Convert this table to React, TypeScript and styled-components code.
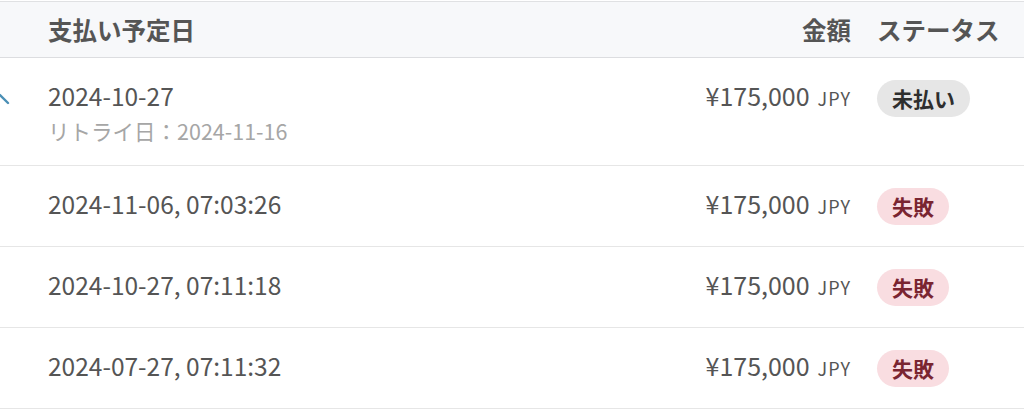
import React from 'react'
import styled, { createGlobalStyle } from 'styled-components'

type Status = 'unpaid' | 'failed'

interface Payment {
  date: string
  retry?: string
  amount: string
  status: Status
  open?: boolean
}

const payments: Payment[] = [
  { date: '2024-10-27', retry: '2024-11-16', amount: '¥175,000', status: 'unpaid', open: true },
  { date: '2024-11-06, 07:03:26', amount: '¥175,000', status: 'failed' },
  { date: '2024-10-27, 07:11:18', amount: '¥175,000', status: 'failed' },
  { date: '2024-07-27, 07:11:32', amount: '¥175,000', status: 'failed' },
]

const statusLabel: Record<Status, string> = {
  unpaid: '未払い',
  failed: '失敗',
}

const GlobalStyle = createGlobalStyle`
  html, body {
    margin: 0;
    padding: 0;
    background: #fff;
  }
  body {
    font-family: "Noto Sans CJK JP", "Noto Sans", sans-serif;
    color: #555;
  }
`

const ChevronUp: React.FC = () => (
  <StyledChevron width="24" height="24" viewBox="0 0 24 24">
    <polyline points="4,16 12,8 20,16" fill="none" stroke="#4a8fb5" strokeWidth="2.4" strokeLinecap="round" strokeLinejoin="round" />
  </StyledChevron>
)

const App: React.FC = () => {
  return (
    <>
      <GlobalStyle />
      <StyledTable>
        <StyledHead>
          <span />
          <StyledHeadCell>支払い予定日</StyledHeadCell>
          <StyledHeadCell>金額</StyledHeadCell>
          <StyledHeadCell>ステータス</StyledHeadCell>
        </StyledHead>
        {payments.map((p, idx) => (
          <StyledRow key={idx}>
            <StyledToggle>{p.open ? <ChevronUp /> : null}</StyledToggle>
            <StyledDateCell>
              <StyledDate>{p.date}</StyledDate>
              {p.retry ? <StyledRetry>リトライ日：{p.retry}</StyledRetry> : null}
            </StyledDateCell>
            <StyledAmount>
              {p.amount}
              <StyledCurrency>JPY</StyledCurrency>
            </StyledAmount>
            <StyledStatusCell>
              <StyledBadge $status={p.status}>{statusLabel[p.status]}</StyledBadge>
            </StyledStatusCell>
          </StyledRow>
        ))}
      </StyledTable>
    </>
  )
}

const StyledTable = styled.section`
  margin-top: 1px;
  width: 100%;
`

const StyledHead = styled.header`
  display: grid;
  grid-template-columns: 22px 1fr auto 120px;
  column-gap: 26px;
  align-items: center;
  height: 55px;
  padding-right: 27px;
  background-color: #f7f8fa;
  border-top: 1px solid #e0e1e3;
  border-bottom: 1px solid #dcdde0;
`

const StyledHeadCell = styled.span`
  font-size: 24.5px;
  font-weight: 700;
  line-height: 34px;
  color: #555;
  white-space: nowrap;
`

const StyledRow = styled.div`
  display: grid;
  grid-template-columns: 22px 1fr auto 120px;
  column-gap: 26px;
  align-items: start;
  padding: 22px 27px 21px 0;
  border-bottom: 1px solid #e6e6e6;
`

const StyledToggle = styled.div`
  height: 37px;
  display: flex;
  align-items: center;
`

const StyledChevron = styled.svg`
  margin-left: -12px;
  flex-shrink: 0;
`

const StyledDateCell = styled.div`
  display: flex;
  flex-direction: column;
`

const StyledDate = styled.span`
  font-size: 24.5px;
  line-height: 31px;
  color: #555;
`

const StyledRetry = styled.span`
  margin-top: 7px;
  font-size: 21.5px;
  line-height: 26px;
  color: #a6a6a6;
`

const StyledAmount = styled.div`
  display: flex;
  align-items: baseline;
  justify-content: flex-end;
  height: 31px;
  font-size: 25px;
  line-height: 31px;
  color: #555;
  white-space: nowrap;
`

const StyledCurrency = styled.span`
  margin-left: 8px;
  font-size: 18px;
  line-height: 31px;
  letter-spacing: 1px;
`

const StyledStatusCell = styled.div`
  display: flex;
  align-items: flex-start;
`

const StyledBadge = styled.span<{ $status: Status }>`
  display: inline-flex;
  align-items: center;
  height: 37px;
  padding: 0 15px;
  border-radius: 20px;
  font-size: 21px;
  font-weight: 700;
  line-height: 1;
  background-color: ${props => (props.$status === 'failed' ? '#f9dde1' : '#e6e6e6')};
  color: ${props => (props.$status === 'failed' ? '#7a2531' : '#2e2e2e')};
`

export default App
